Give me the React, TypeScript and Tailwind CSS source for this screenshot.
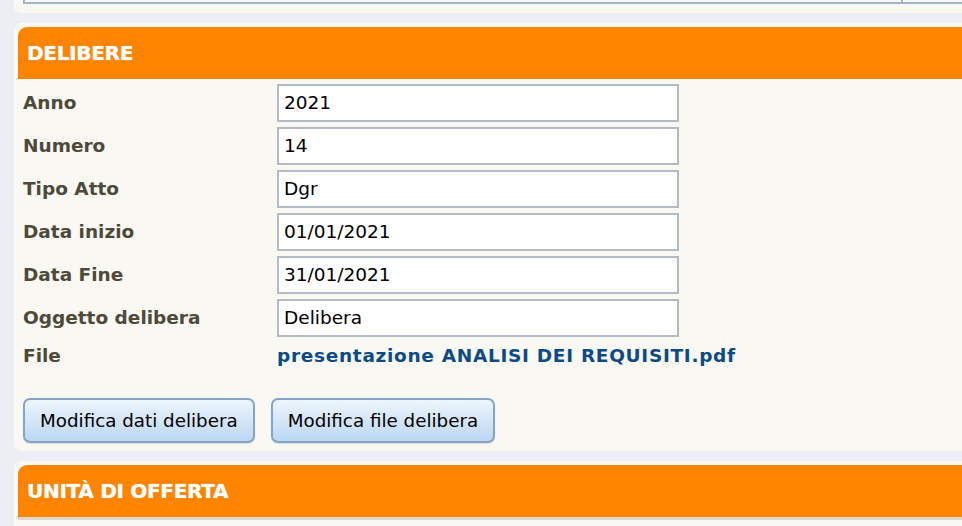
const FONT = "font-['DejaVu_Sans',Verdana,sans-serif]";

const fields = [
  { label: 'Anno', value: '2021' },
  { label: 'Numero', value: '14' },
  { label: 'Tipo Atto', value: 'Dgr' },
  { label: 'Data inizio', value: '01/01/2021' },
  { label: 'Data Fine', value: '31/01/2021' },
  { label: 'Oggetto delibera', value: 'Delibera' },
];

function PanelHeader({ title }: { title: string }) {
  return (
    <div className="h-[52px] bg-[#ff8400] rounded-tl-[9px] flex items-center pl-[9px]">
      <h2 className="text-white font-bold text-[20px] tracking-[-0.3px] [text-shadow:0_0_1px_rgba(255,255,255,0.9)]">
        {title}
      </h2>
    </div>
  );
}

function FormButton({ children }: { children: string }) {
  return (
    <button className="h-[45px] px-[15px] rounded-[7px] border-2 border-[#82a5c8] bg-gradient-to-b from-[#edf5fd] to-[#bcd7f2] text-[18.3px] text-black shadow-[0_1px_1px_rgba(0,0,0,0.12)]">
      {children}
    </button>
  );
}

export default function App() {
  return (
    <div className={`w-[962px] h-[526px] overflow-hidden bg-[#eceef3] ${FONT}`}>
      <div className="w-[1010px] pl-[14px] flex flex-col gap-[10px]">
        {/* previous panel, cut off at the top */}
        <div className="h-[13px] bg-[#f9f8f3] rounded-b-[7px] pl-[9px]">
          <div className="h-[4px] border-l-2 border-b-2 border-[#a1b6ca] flex">
            <div className="w-[876px]" />
            <div className="w-[2px] bg-[#a1b6ca]" />
          </div>
        </div>

        {/* DELIBERE */}
        <section className="bg-[#f9f8f3] rounded-[7px] pt-[4px] pl-[4px] pb-[8px]">
          <PanelHeader title="DELIBERE" />
          <div className="pl-[5px] pt-[5px] flex flex-col gap-[5px]">
            {fields.map((f) => (
              <div key={f.label} className="h-[38px] flex items-center">
                <span className="w-[254px] font-bold text-[18.5px] text-[#4e4a3a]">{f.label}</span>
                <div className="w-[402px] h-[38px] border-2 border-[#b3bbc7] bg-white flex items-center px-[5px] text-[18.5px] text-black">
                  {f.value}
                </div>
              </div>
            ))}
            <div className="h-[28px] flex items-center">
              <span className="w-[254px] font-bold text-[18.5px] text-[#4e4a3a]">File</span>
              <a href="#" className="font-bold text-[18.5px] tracking-[0.7px] text-[#0c4b87]">
                presentazione ANALISI DEI REQUISITI.pdf
              </a>
            </div>
            <div className="flex gap-[16px] pt-[23px]">
              <FormButton>Modifica dati delibera</FormButton>
              <FormButton>Modifica file delibera</FormButton>
            </div>
          </div>
        </section>

        {/* UNITÀ DI OFFERTA */}
        <section className="bg-[#f9f8f3] rounded-t-[7px] pt-[4px] pl-[4px] h-[80px]">
          <PanelHeader title="UNITÀ DI OFFERTA" />
          <div className="h-[3px] bg-[#d9d8d2]" />
        </section>
      </div>
    </div>
  );
}
